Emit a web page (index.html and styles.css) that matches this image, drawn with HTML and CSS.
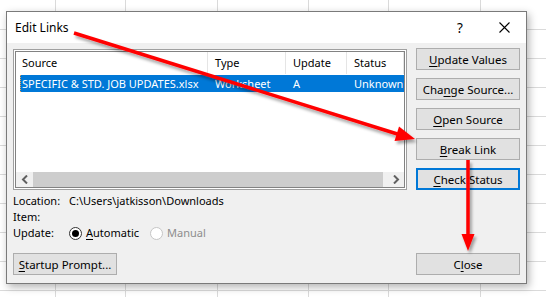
FILE: index.html
```html
<!DOCTYPE html>
<html lang="en">
<head>
  <meta charset="UTF-8">
  <title>Edit Links</title>
  <link rel="stylesheet" href="styles.css">
</head>
<body>
  <div class="sheet">
    <!-- dialog window -->
    <div class="dialog">
      <div class="titlebar">
        <span class="title">Edit Links</span>
        <span class="tb-btn help">?</span>
        <span class="tb-btn">
          <svg width="11" height="11" viewBox="0 0 11 11"><path d="M0.5 0.5 L10.5 10.5 M10.5 0.5 L0.5 10.5" stroke="#000" stroke-width="1.1" fill="none"/></svg>
        </span>
      </div>

      <div class="body">
        <div class="left">
          <div class="listbox">
            <div class="list-inner">
              <div class="list-head">
                <div class="cell first">Source</div>
                <div class="cell">Type</div>
                <div class="cell">Update</div>
                <div class="cell">Status</div>
              </div>
              <div class="list-rows">
                <div class="row selected">
                  <div class="cell first">SPECIFIC &amp; STD. JOB UPDATES.xlsx</div>
                  <div class="cell">Worksheet</div>
                  <div class="cell">A</div>
                  <div class="cell">Unknown</div>
                </div>
              </div>
              <div class="hscroll">
                <span class="sb-arrow">
                  <svg width="8" height="9" viewBox="0 0 8 9"><path d="M6 0.5 L2 4.5 L6 8.5" stroke="#606060" stroke-width="2" fill="none"/></svg>
                </span>
                <span class="sb-thumb"></span>
                <span class="sb-space"></span>
                <span class="sb-arrow">
                  <svg width="8" height="9" viewBox="0 0 8 9"><path d="M2 0.5 L6 4.5 L2 8.5" stroke="#606060" stroke-width="2" fill="none"/></svg>
                </span>
              </div>
            </div>
          </div>

          <div class="info">
            <div class="info-line"><span class="info-label">Location:</span><span>C:\Users\jatkisson\Downloads</span></div>
            <div class="info-line"><span class="info-label">Item:</span></div>
            <div class="info-line">
              <span class="info-label">Update:</span>
              <span class="radio radio-auto"><span class="radio-dot checked"></span><span><u>A</u>utomatic</span></span>
              <span class="radio disabled"><span class="radio-dot"></span><span>Manual</span></span>
            </div>
          </div>

          <button class="btn startup"><u>S</u>tartup Prompt...</button>
        </div>

        <div class="right">
          <button class="btn"><u>U</u>pdate Values</button>
          <button class="btn">Cha<u>n</u>ge Source...</button>
          <button class="btn"><u>O</u>pen Source</button>
          <button class="btn"><u>B</u>reak Link</button>
          <button class="btn focus"><u>C</u>heck Status</button>
          <button class="btn close-btn">C<u>l</u>ose</button>
        </div>
      </div>
    </div>

    <!-- red annotation arrows -->
    <svg class="arrows" width="546" height="297" viewBox="0 0 546 297">
      <defs>
        <filter id="shadow" x="-10%" y="-10%" width="130%" height="130%">
          <feDropShadow dx="2" dy="3" stdDeviation="1.5" flood-color="#000" flood-opacity="0.35"/>
        </filter>
      </defs>
      <g filter="url(#shadow)" fill="#f00" stroke="none">
        <line x1="74" y1="33" x2="399" y2="134.5" stroke="#f00" stroke-width="3.5"/>
        <polygon points="415,139 394.5,141 399,126.5"/>
        <line x1="468" y1="160" x2="468" y2="236" stroke="#f00" stroke-width="3.5"/>
        <polygon points="461.5,234 474.5,234 468,251"/>
      </g>
    </svg>
  </div>
</body>
</html>
```

FILE: styles.css
```css
* { box-sizing: border-box; }
body { margin: 0; font-family: "Noto Sans", "Liberation Sans", sans-serif; font-size: 11px; color: #000; }

/* spreadsheet behind the dialog */
.sheet {
  position: relative;
  width: 546px;
  height: 297px;
  overflow: hidden;
  background-color: #fff;
  background-image:
    linear-gradient(#dadada, #dadada), linear-gradient(#dadada, #dadada), linear-gradient(#dadada, #dadada),
    linear-gradient(#dadada, #dadada), linear-gradient(#dadada, #dadada), linear-gradient(#dadada, #dadada),
    repeating-linear-gradient(to bottom, transparent 0 28px, #dadada 28px 29px);
  background-size: 1px 100%, 1px 100%, 1px 100%, 1px 100%, 1px 100%, 1px 100%, 100% 100%;
  background-position: 55px 0, 125px 0, 217px 0, 308px 0, 388px 0, 480px 0, 0 1px;
  background-repeat: no-repeat;
}

.dialog {
  position: absolute;
  left: 6px;
  top: 11px;
  width: 521px;
  height: 273px;
  border: 1px solid #7a7a7a;
  background: #f0f0f0;
  box-shadow: 2px 3px 8px rgba(0,0,0,0.3);
  display: flex;
  flex-direction: column;
}
.titlebar { height: 31px; background: #fff; display: flex; align-items: center; padding-left: 8px; }
.title { flex: 1; font-size: 12px; }
.tb-btn { width: 44px; height: 31px; display: flex; align-items: center; justify-content: center; }
.help { font-size: 13.5px; }

.body { flex: 1; display: flex; gap: 9px; padding: 5px 6px 8px; }
.left { width: 394px; display: flex; flex-direction: column; }
.right { width: 104px; display: flex; flex-direction: column; gap: 8px; }

.btn { height: 22px; background: #e1e1e1; border: 1px solid #adadad; font: inherit; font-size: 11.5px; color: #000; padding: 0; text-align: center; }
.btn.focus { border: 2px solid #0078d7; }
.btn.close-btn { margin-top: auto; }
.btn.startup { width: 104px; margin-top: auto; }
u { text-underline-offset: 2px; }

/* links list */
.listbox { margin-top: 1px; border: 1px solid #a0a0a0; padding: 1px; background: #fff; }
.list-inner { height: 137px; border: 1px solid #828282; display: flex; flex-direction: column; overflow: hidden; background: #fff; }
.list-head { height: 22px; flex: none; display: grid; grid-template-columns: 192px 78px 61px 1fr; }
.list-head .cell { line-height: 22px; padding-left: 7px; border-right: 1px solid #e5e5e5; white-space: nowrap; }
.list-head .cell.first { padding-left: 6px; }
.list-rows { flex: 1; overflow: hidden; }
.row { margin: 1px 0 0 4px; height: 17px; display: grid; grid-template-columns: 188px 78px 61px 1fr; white-space: nowrap; }
.row .cell { line-height: 17px; padding-left: 7px; overflow: hidden; }
.row .cell.first { padding-left: 1px; border-left: 1px dotted #f0a050; }
.row.selected { background: #0078d7; color: #fff; }

.hscroll { height: 15px; flex: none; background: #f0f0f0; display: flex; }
.sb-arrow { width: 17px; display: flex; align-items: center; justify-content: center; }
.sb-thumb { width: 350px; background: #cdcdcd; }
.sb-space { flex: 1; }

/* location / item / update */
.info { margin-top: 3px; }
.info-line { height: 16px; line-height: 16px; display: flex; align-items: center; }
.info-label { width: 56px; flex: none; }
.radio { display: flex; align-items: center; gap: 4px; }
.radio-auto { width: 81px; }
.radio-dot { width: 13px; height: 13px; border-radius: 50%; border: 1px solid #333; background: #fff; display: flex; align-items: center; justify-content: center; }
.radio-dot.checked::after { content: ""; width: 7px; height: 7px; border-radius: 50%; background: #000; }
.radio.disabled { color: #8d8d8d; }
.radio.disabled .radio-dot { border-color: #c6c6c6; }

.arrows { position: absolute; left: 0; top: 0; pointer-events: none; }
```
